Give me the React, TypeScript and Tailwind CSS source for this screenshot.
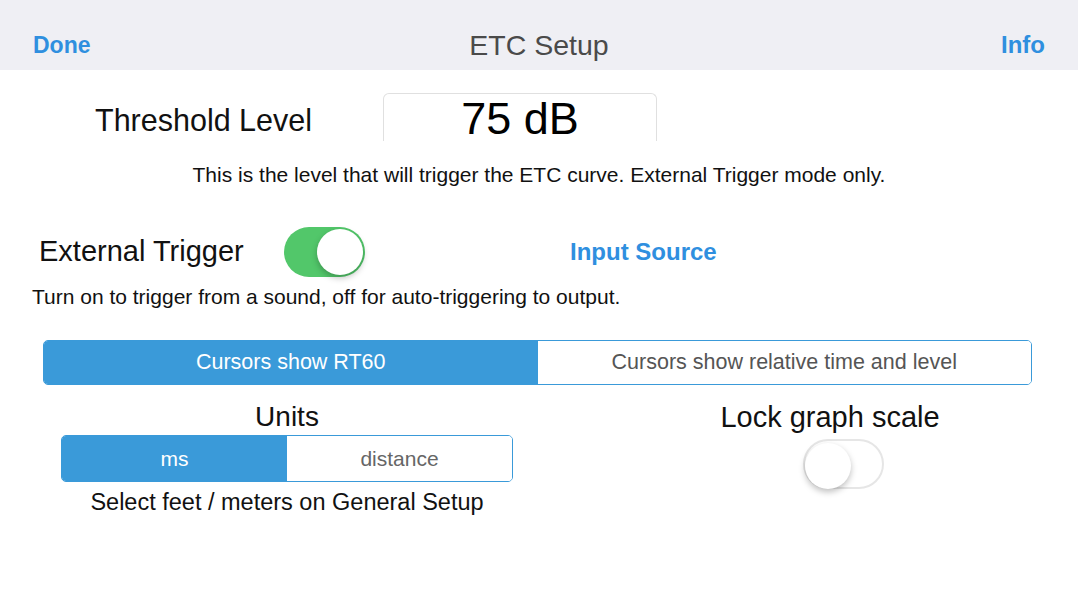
import React from 'react';

const font = { fontFamily: '"Liberation Sans", Arial, sans-serif' };

const Toggle = ({ on }: { on: boolean }) => (
  <div
    className={`relative w-[81px] h-[50px] rounded-full ${
      on ? 'bg-[#52c76a]' : 'bg-white border-2 border-[#e6e6e6]'
    }`}
  >
    <div
      className={`absolute top-[2px] w-[46px] h-[46px] rounded-full bg-white shadow-[0_3px_6px_rgba(0,0,0,0.25)] ${
        on ? 'right-[2px]' : 'left-0 top-0'
      }`}
    />
  </div>
);

export default function App() {
  return (
    <div className="w-[1078px] h-[606px] bg-white overflow-hidden" style={font}>
      {/* nav bar */}
      <div className="h-[70px] bg-[#efeff4] pt-[20px] px-[33px] flex items-center justify-between">
        <span className="text-[23px] font-bold text-[#2f8fdf] w-[90px]">Done</span>
        <span className="text-[28.5px] text-[#4a4a4a]">ETC Setup</span>
        <span className="text-[24px] font-bold text-[#2f8fdf] w-[90px] text-right">Info</span>
      </div>

      {/* threshold */}
      <div className="mt-[23px] pl-[95px] flex items-center h-[48px]">
        <span className="w-[288px] mt-[6px] text-[30.5px] leading-none text-[#111]">Threshold Level</span>
        <div className="w-[274px] h-[48px] border-t border-x border-[#e0e0e0] rounded-t-[6px] flex items-center justify-center">
          <span className="text-[45px] leading-none text-black mt-[2px]">75 dB</span>
        </div>
      </div>
      <p className="mt-[22px] text-center text-[21px] text-[#111] leading-[24px]">
        This is the level that will trigger the ETC curve. External Trigger mode only.
      </p>

      {/* external trigger */}
      <div className="mt-[40px] pl-[39px] flex items-center h-[50px]">
        <span className="w-[245px] text-[29px] text-[#111]">External Trigger</span>
        <Toggle on />
        <span className="ml-[205px] text-[24px] font-bold text-[#2f8fdf]">Input Source</span>
      </div>
      <p className="mt-[8px] pl-[32px] text-[21px] text-[#111] leading-[24px]">
        Turn on to trigger from a sound, off for auto-triggering to output.
      </p>

      {/* cursors segment */}
      <div className="mt-[31px] ml-[43px] w-[989px] h-[45px] flex border-[1.5px] border-[#3a9ad9] rounded-[5px] overflow-hidden">
        <div className="flex-1 bg-[#3a9ad9] flex items-center justify-center text-[21.5px] text-white">
          Cursors show RT60
        </div>
        <div className="flex-1 bg-white flex items-center justify-center text-[21.5px] text-[#555]">
          Cursors show relative time and level
        </div>
      </div>

      {/* units + lock */}
      <div className="mt-[15px] pl-[61px] flex">
        <div className="w-[452px] flex flex-col items-center">
          <span className="text-[28px] leading-[34px] text-[#111]">Units</span>
          <div className="mt-[1px] w-full h-[47px] flex border-[1.5px] border-[#3a9ad9] rounded-[5px] overflow-hidden">
            <div className="flex-1 bg-[#3a9ad9] flex items-center justify-center text-[21px] text-white">ms</div>
            <div className="flex-1 bg-white flex items-center justify-center text-[21px] text-[#666]">distance</div>
          </div>
          <span className="mt-[8px] text-[23.5px] leading-[24px] text-[#111] whitespace-nowrap">Select feet / meters on General Setup</span>
        </div>
        <div className="ml-[207px] w-[220px] flex flex-col items-center">
          <span className="text-[29px] leading-[34px] text-[#111] whitespace-nowrap">Lock graph scale</span>
          <div className="mt-[5px] ml-[26px]">
            <Toggle on={false} />
          </div>
        </div>
      </div>
    </div>
  );
}
